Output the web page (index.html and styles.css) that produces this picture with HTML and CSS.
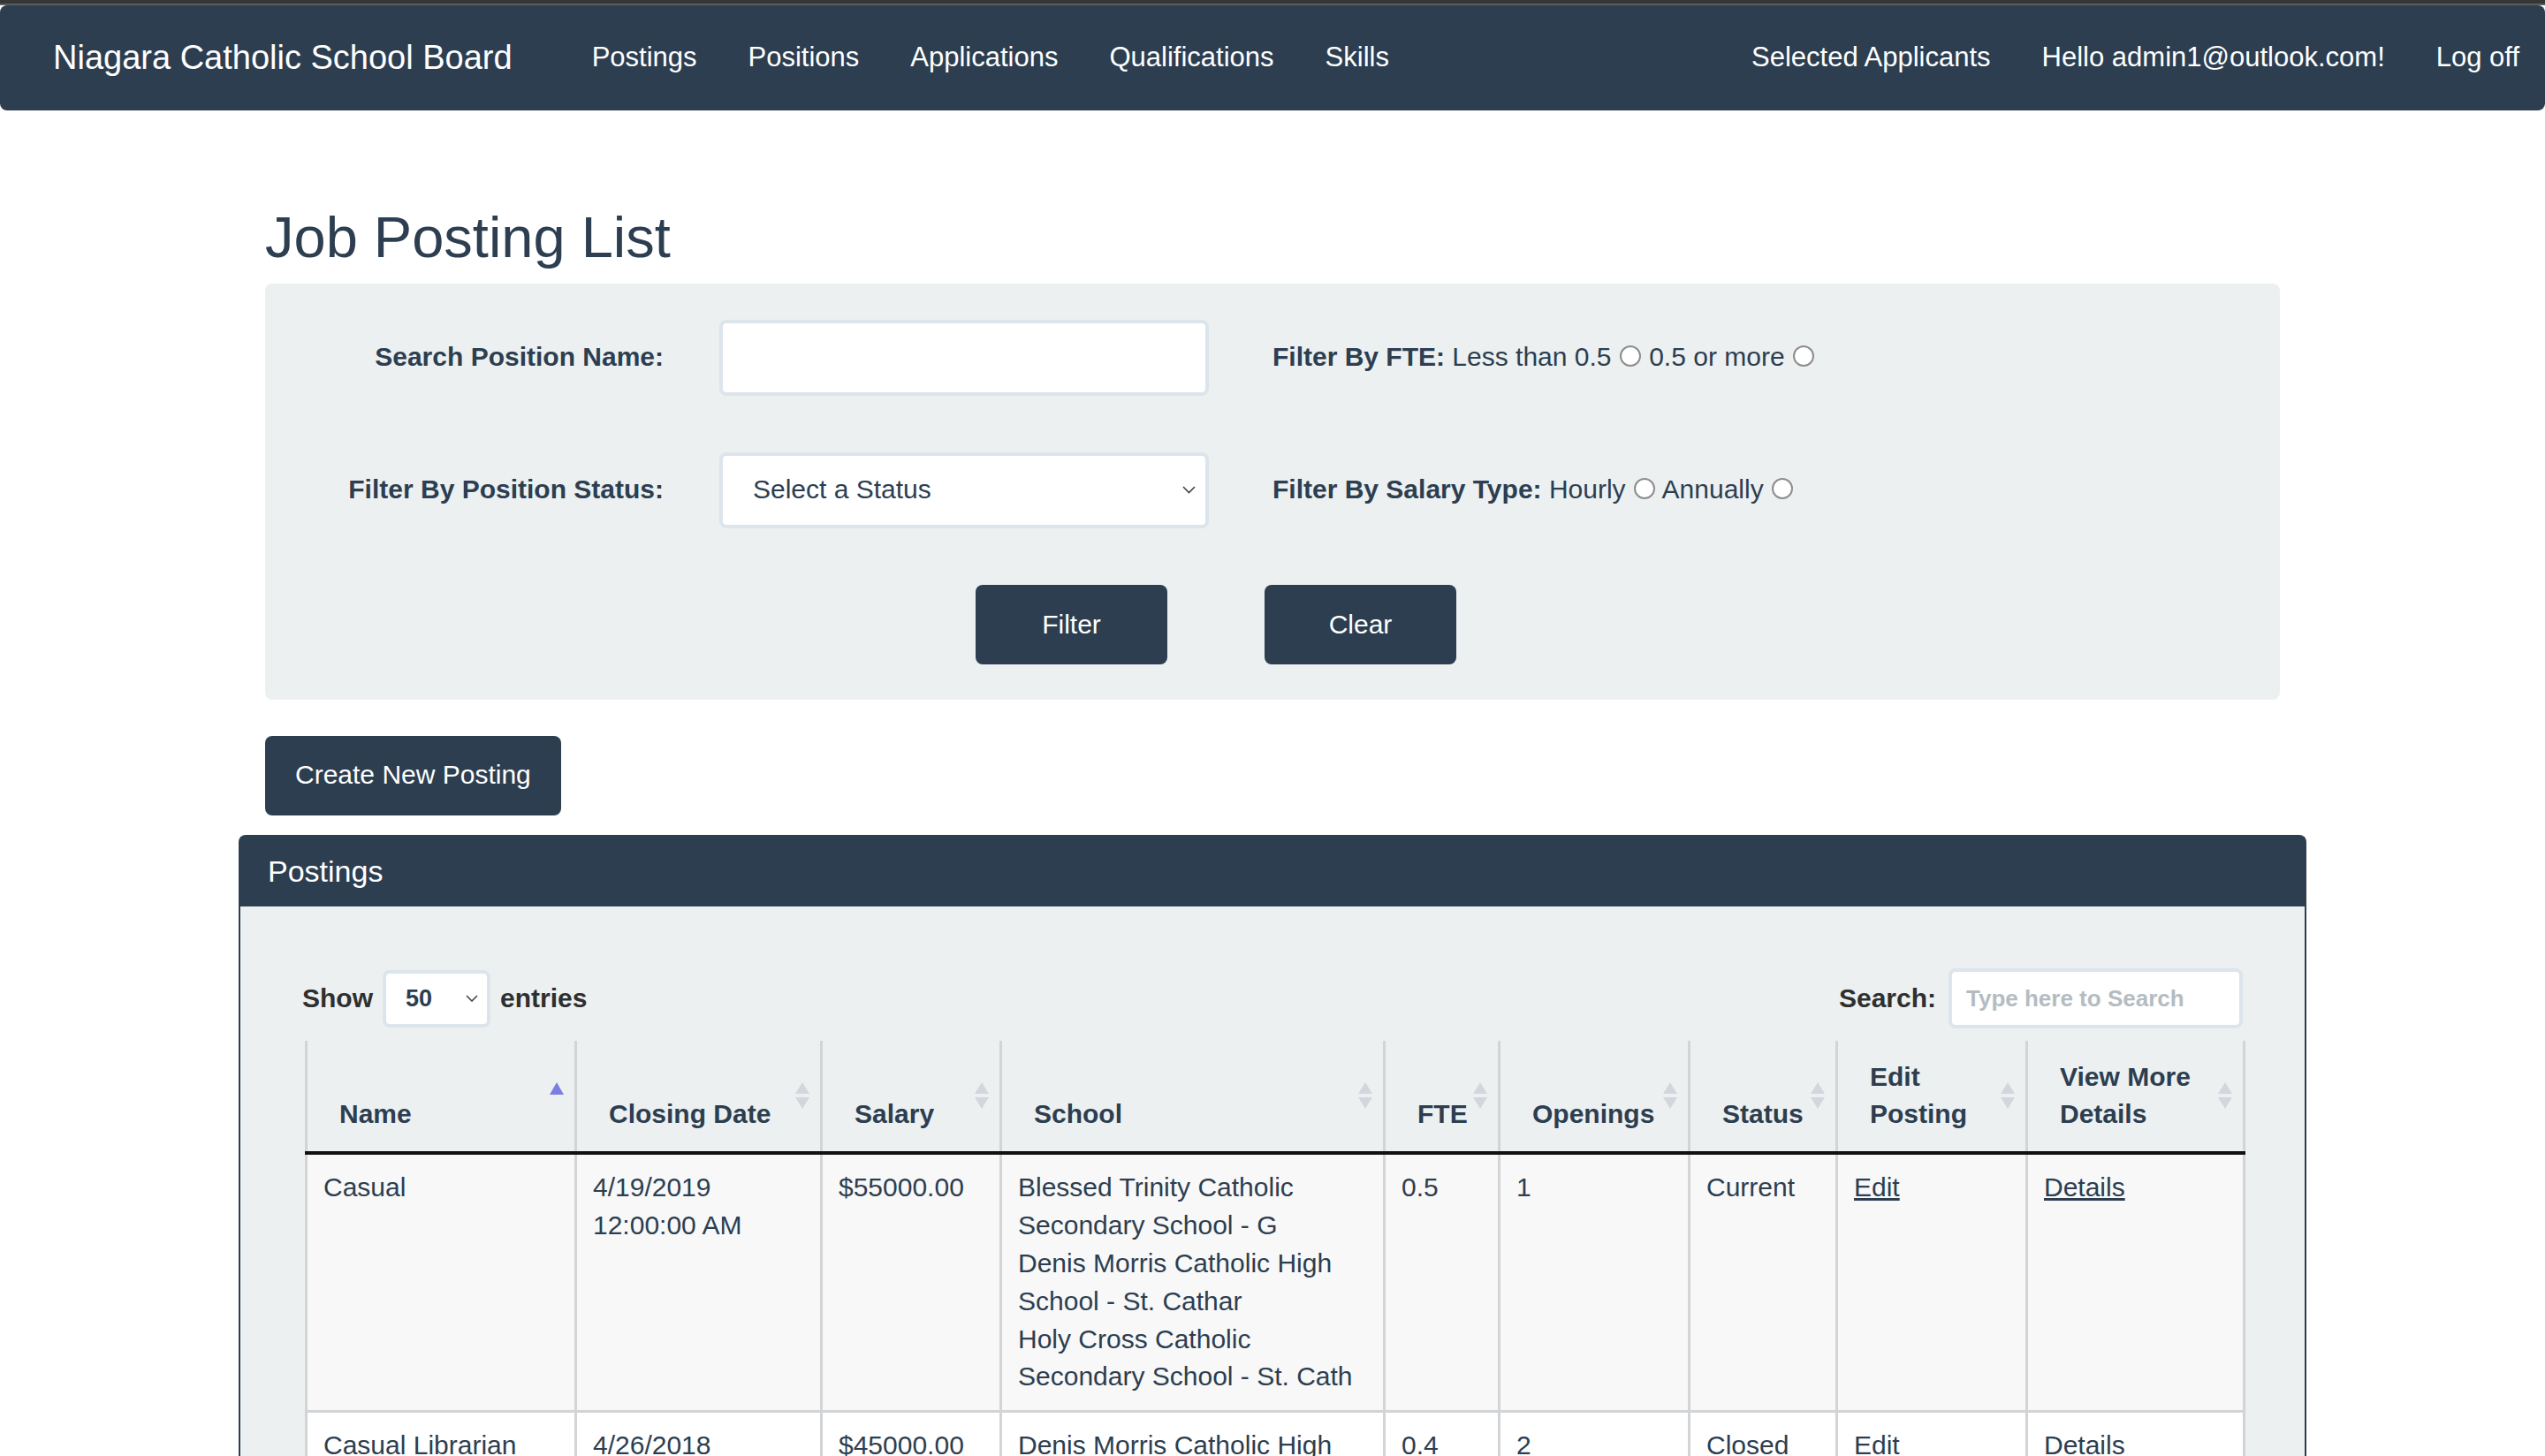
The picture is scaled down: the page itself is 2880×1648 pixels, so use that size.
FILE: index.html
```html
<!DOCTYPE html>
<html lang="en">
<head>
<meta charset="utf-8">
<title>Job Posting List - Niagara Catholic School Board</title>
<link rel="stylesheet" href="styles.css">
</head>
<body>
<div class="chrome"></div>
<nav class="navbar">
  <a class="brand" href="#">Niagara Catholic School Board</a>
  <ul class="nav-links">
    <li><a href="#">Postings</a></li>
    <li><a href="#">Positions</a></li>
    <li><a href="#">Applications</a></li>
    <li><a href="#">Qualifications</a></li>
    <li><a href="#">Skills</a></li>
  </ul>
  <ul class="nav-links nav-right">
    <li><a href="#">Selected Applicants</a></li>
    <li><a href="#">Hello admin1@outlook.com!</a></li>
    <li><a href="#">Log off</a></li>
  </ul>
</nav>

<main class="container">
  <h1 class="page-title">Job Posting List</h1>

  <form class="well">
    <div class="form-row">
      <label class="form-label">Search Position Name:</label>
      <div class="form-control"></div>
      <div class="form-aside"><b>Filter By FTE:</b> Less than 0.5 <input class="radio" type="radio" name="fte"> 0.5 or more <input class="radio" type="radio" name="fte"></div>
    </div>
    <div class="form-row">
      <label class="form-label">Filter By Position Status:</label>
      <div class="form-control select">
        <span>Select a Status</span>
        <svg class="chev" width="15" height="9" viewBox="0 0 15 9"><path d="M1 1 L7.5 7.5 L14 1" fill="none" stroke="#444" stroke-width="1.6"/></svg>
      </div>
      <div class="form-aside"><b>Filter By Salary Type:</b> Hourly <input class="radio" type="radio" name="sal"> Annually <input class="radio" type="radio" name="sal"></div>
    </div>
    <div class="btn-row">
      <button type="button" class="btn btn-fixed">Filter</button>
      <button type="button" class="btn btn-fixed">Clear</button>
    </div>
  </form>

  <div class="create-row">
    <a class="btn btn-create" href="#">Create New Posting</a>
  </div>

  <section class="card">
    <div class="card-header">Postings</div>
    <div class="card-body">
      <div class="dt-top">
        <div class="dt-length">
          <span>Show</span>
          <div class="len-select">
            <span>50</span>
            <svg width="14" height="8" viewBox="0 0 14 8"><path d="M1 1 L7 7 L13 1" fill="none" stroke="#444" stroke-width="1.6"/></svg>
          </div>
          <span>entries</span>
        </div>
        <div class="dt-search">
          <span>Search:</span>
          <input class="search-input" type="text" placeholder="Type here to Search">
        </div>
      </div>

      <table class="dt">
        <colgroup>
          <col style="width:305px"><col style="width:278px"><col style="width:203px"><col style="width:434px"><col style="width:130px"><col style="width:215px"><col style="width:167px"><col style="width:215px"><col style="width:246px">
        </colgroup>
        <thead>
          <tr>
            <th>Name<svg class="sort" width="16" height="30" viewBox="0 0 16 30"><path d="M8 0 L16 14 L0 14 Z" fill="#7b7fe0"/></svg></th>
            <th>Closing Date<svg class="sort" width="16" height="30" viewBox="0 0 16 30"><path d="M8 0 L16 13 L0 13 Z M0 17 L16 17 L8 30 Z" fill="#d3d7dd"/></svg></th>
            <th>Salary<svg class="sort" width="16" height="30" viewBox="0 0 16 30"><path d="M8 0 L16 13 L0 13 Z M0 17 L16 17 L8 30 Z" fill="#d3d7dd"/></svg></th>
            <th>School<svg class="sort" width="16" height="30" viewBox="0 0 16 30"><path d="M8 0 L16 13 L0 13 Z M0 17 L16 17 L8 30 Z" fill="#d3d7dd"/></svg></th>
            <th>FTE<svg class="sort" width="16" height="30" viewBox="0 0 16 30"><path d="M8 0 L16 13 L0 13 Z M0 17 L16 17 L8 30 Z" fill="#d3d7dd"/></svg></th>
            <th>Openings<svg class="sort" width="16" height="30" viewBox="0 0 16 30"><path d="M8 0 L16 13 L0 13 Z M0 17 L16 17 L8 30 Z" fill="#d3d7dd"/></svg></th>
            <th>Status<svg class="sort" width="16" height="30" viewBox="0 0 16 30"><path d="M8 0 L16 13 L0 13 Z M0 17 L16 17 L8 30 Z" fill="#d3d7dd"/></svg></th>
            <th>Edit<br>Posting<svg class="sort" width="16" height="30" viewBox="0 0 16 30"><path d="M8 0 L16 13 L0 13 Z M0 17 L16 17 L8 30 Z" fill="#d3d7dd"/></svg></th>
            <th>View More<br>Details<svg class="sort" width="16" height="30" viewBox="0 0 16 30"><path d="M8 0 L16 13 L0 13 Z M0 17 L16 17 L8 30 Z" fill="#d3d7dd"/></svg></th>
          </tr>
        </thead>
        <tbody>
          <tr class="odd">
            <td>Casual</td>
            <td>4/19/2019 12:00:00 AM</td>
            <td>$55000.00</td>
            <td>Blessed Trinity Catholic Secondary School - G<br>Denis Morris Catholic High School - St. Cathar<br>Holy Cross Catholic Secondary School - St. Cath</td>
            <td>0.5</td>
            <td>1</td>
            <td>Current</td>
            <td><a href="#">Edit</a></td>
            <td><a href="#">Details</a></td>
          </tr>
          <tr class="even">
            <td>Casual Librarian</td>
            <td>4/26/2018 12:00:00 AM</td>
            <td>$45000.00</td>
            <td>Denis Morris Catholic High School - St. Cathar</td>
            <td>0.4</td>
            <td>2</td>
            <td>Closed</td>
            <td><a href="#">Edit</a></td>
            <td><a href="#">Details</a></td>
          </tr>
        </tbody>
      </table>
    </div>
  </section>
</main>
</body>
</html>
```

FILE: styles.css
```css
* { box-sizing: border-box; }

html { overflow: hidden; }

body {
  margin: 0;
  background: #ffffff;
  color: #2c3e50;
  font-family: "Liberation Sans", Arial, Helvetica, sans-serif;
  font-size: 30px;
  line-height: 1.42857;
}

.chrome {
  height: 6px;
  background: #363636;
  border-bottom: 2px solid #5e5e5e;
}

/* Navbar */
.navbar {
  display: flex;
  align-items: center;
  height: 119px;
  background: #2c3e50;
  border-radius: 8px;
  padding-left: 60px;
}

.brand {
  color: #ffffff;
  font-size: 38px;
  text-decoration: none;
  margin-right: 61px;
}

.nav-links {
  display: flex;
  list-style: none;
  margin: 0;
  padding: 0;
}

.nav-links a {
  display: block;
  padding: 0 29px;
  color: #ffffff;
  font-size: 31px;
  text-decoration: none;
}

.nav-right { margin-left: auto; }

/* Page */
.container {
  width: 2340px;
  margin: 0 auto;
  padding: 0 30px;
}

.page-title {
  font-size: 65px;
  font-weight: 400;
  line-height: 1.1;
  margin: 108px 0 16px;
}

/* Filter panel */
.well {
  background: #ecf0f1;
  border-radius: 8px;
  padding: 41px 0 40px;
}

.form-row {
  display: flex;
  align-items: center;
}

.form-row + .form-row { margin-top: 64px; }

.form-label {
  width: 451px;
  text-align: right;
  font-weight: 700;
}

.form-control {
  margin-left: 63px;
  width: 554px;
  height: 86px;
  background: #ffffff;
  border: 4px solid #dce4ec;
  border-radius: 8px;
}

.select {
  display: flex;
  align-items: center;
  justify-content: space-between;
  padding: 0 11px 0 34px;
}

.form-aside { margin-left: 72px; }

.radio {
  appearance: none;
  -webkit-appearance: none;
  width: 24px;
  height: 24px;
  margin: 0 1px;
  border: 2px solid #8d8d8d;
  border-radius: 50%;
  background: #ffffff;
  vertical-align: -1px;
}

.btn-row {
  display: flex;
  gap: 110px;
  padding-left: 804px;
  margin-top: 64px;
}

.btn {
  display: inline-flex;
  align-items: center;
  justify-content: center;
  height: 90px;
  background: #2c3e50;
  color: #ffffff;
  border: 0;
  border-radius: 8px;
  font-family: inherit;
  font-size: 30px;
  text-decoration: none;
}

.btn-fixed { width: 217px; }

.create-row { margin-top: 41px; }

.btn-create { padding: 0 34px; }

/* Card */
.card {
  margin: 22px -30px 0;
  background: #ecf0f1;
  border: 2px solid #2c3e50;
  border-bottom: 0;
  border-radius: 8px 8px 0 0;
}

.card-header {
  display: flex;
  align-items: center;
  height: 79px;
  padding-left: 31px;
  background: #2c3e50;
  color: #ffffff;
  font-size: 34px;
}

.card-body { padding: 71px 70px 0 73px; }

.dt-top {
  display: flex;
  justify-content: space-between;
  align-items: center;
  height: 67px;
  margin-bottom: 14px;
  color: #2f2f2f;
  font-weight: 700;
}

.dt-length {
  display: flex;
  align-items: center;
  gap: 11px;
  margin-left: -3px;
}

.len-select {
  display: flex;
  align-items: center;
  justify-content: space-between;
  width: 122px;
  height: 65px;
  padding: 0 10px 0 22px;
  background: #ffffff;
  border: 4px solid #dce4ec;
  border-radius: 8px;
  font-size: 27px;
  color: #2c3e50;
}

.dt-search {
  display: flex;
  align-items: center;
  gap: 14px;
}

.search-input {
  width: 333px;
  height: 68px;
  padding: 0 16px;
  border: 4px solid #dce4ec;
  border-radius: 8px;
  background: #ffffff;
  font-family: inherit;
  font-size: 26px;
  font-weight: 700;
  color: #2c3e50;
}

.search-input::placeholder { color: #b4bcc2; }

/* Table */
.dt {
  width: 100%;
  table-layout: fixed;
  border-collapse: collapse;
}

.dt th {
  position: relative;
  padding: 20px 50px 20px 36px;
  text-align: left;
  vertical-align: bottom;
  white-space: nowrap;
  font-weight: 700;
  background: #ecf0f1;
  border-left: 3px solid #d2d4d6;
  border-right: 3px solid #d2d4d6;
  border-bottom: 4px solid #111111;
}

.sort {
  position: absolute;
  right: 12px;
  top: 50%;
  transform: translateY(-50%);
}

.dt td {
  padding: 16px 18px;
  vertical-align: top;
  border: 3px solid #d2d4d6;
}

.dt tr.odd td { background: #f8f8f8; }
.dt tr.even td { background: #ffffff; }

.dt a { color: #2c3e50; text-decoration: underline; }
```
